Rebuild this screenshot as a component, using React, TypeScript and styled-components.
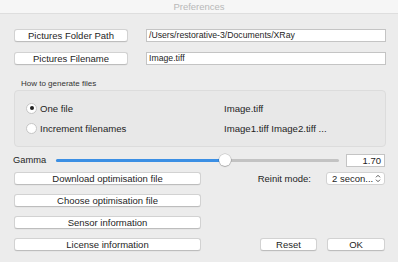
import React, {useState} from "react";
import styled, {createGlobalStyle} from "styled-components";

const GlobalStyle = createGlobalStyle`
  html, body {
    margin: 0;
    padding: 0;
    background: #ececec;
  }
  body {
    font-family: "Liberation Sans", Arial, sans-serif;
    font-size: 9.5px;
    color: #1e1e1e;
  }
`;

const Window = styled.div`
  width: 398px;
  height: 262px;
  background: #ececec;
  display: flex;
  flex-direction: column;
  overflow: hidden;
`;

const TitleBar = styled.div`
  height: 13px;
  background: #f6f6f6;
  border-bottom: 1px solid #dedede;
  color: #b8b8b8;
  font-size: 9.5px;
  line-height: 14px;
  text-align: center;
`;

const Content = styled.div`
  padding: 15px 12px 0 14px;
  display: flex;
  flex-direction: column;
`;

const Row = styled.div<{ $top?: number }>`
  display: flex;
  align-items: center;
  height: 13px;
  margin-top: ${p => p.$top ?? 0}px;
`;

const Button = styled.button<{ $w: number }>`
  box-sizing: border-box;
  width: ${p => p.$w}px;
  height: 13px;
  padding: 0;
  margin: 0;
  background: #ffffff;
  border: 1px solid #d2d2d2;
  border-bottom-color: #bdbdbd;
  border-radius: 3px;
  font-family: inherit;
  font-size: 9.5px;
  line-height: 11px;
  color: #1e1e1e;
  box-shadow: 0 0.5px 0.5px rgba(0, 0, 0, 0.06);
`;

const Field = styled.div<{ $w: number }>`
  box-sizing: border-box;
  width: ${p => p.$w}px;
  height: 13px;
  margin-left: auto;
  background: #ffffff;
  border: 1px solid #c4c4c4;
  padding: 0 2px;
  font-size: 8.7px;
  line-height: 11px;
  white-space: nowrap;
  overflow: hidden;
`;

const GroupLabel = styled.div`
  margin: 14px 0 0 7px;
  height: 9px;
  font-size: 8px;
  line-height: 9px;
  color: #333;
`;

const Group = styled.div`
  box-sizing: border-box;
  margin-top: 2px;
  height: 57px;
  border: 1px solid #dcdcdc;
  border-radius: 4px;
  background: #e8e8e8;
  padding: 7px 0 0 11px;
  display: grid;
  grid-template-columns: 187px 1fr;
  grid-auto-rows: 20px;
  align-items: center;
`;

const RadioLabel = styled.label`
  display: flex;
  align-items: center;
  gap: 3px;
  font-size: 9.6px;
`;

const RadioDot = styled.span<{ $on: boolean }>`
  box-sizing: border-box;
  width: 11px;
  height: 11px;
  border-radius: 50%;
  background: #fff;
  border: 1px solid #c6c6c6;
  display: flex;
  align-items: center;
  justify-content: center;
  &::after {
    content: "";
    width: 4px;
    height: 4px;
    border-radius: 50%;
    background: ${p => (p.$on ? "#222" : "transparent")};
  }
`;

const GroupText = styled.span`
  font-size: 9.6px;
  padding-left: 11px;
`;

const GammaRow = styled.div`
  display: flex;
  align-items: center;
  height: 14px;
  margin-top: 6px;
`;

const GammaLabel = styled.span`
  width: 43px;
  margin-left: -1px;
  font-size: 9.3px;
`;

const Track = styled.div`
  position: relative;
  width: 283px;
  height: 3px;
  border-radius: 2px;
  background: #c3c3c3;
`;

const TrackFill = styled.div`
  height: 100%;
  border-radius: 2px;
  background: #3b8fe4;
`;

const Thumb = styled.div`
  position: absolute;
  top: 50%;
  width: 12px;
  height: 12px;
  margin: -6px 0 0 -6px;
  border-radius: 50%;
  background: #fff;
  box-shadow: 0 0 0 0.5px rgba(0, 0, 0, 0.22), 0 1px 1px rgba(0, 0, 0, 0.18);
`;

const ValueBox = styled.div`
  box-sizing: border-box;
  width: 39px;
  height: 13px;
  margin-left: auto;
  margin-right: 1px;
  background: #fff;
  border: 1px solid #c4c4c4;
  font-size: 9.5px;
  line-height: 11px;
  text-align: right;
  padding-right: 3px;
`;

const Lower = styled.div`
  margin-top: 5px;
  display: grid;
  grid-template-columns: 187px 1fr;
  grid-template-rows: 13px 13px 13px 13px;
  row-gap: 9px;
`;

const Side = styled.div`
  display: flex;
  align-items: center;
  justify-content: flex-end;
  gap: 10px;
  padding-right: 1px;
`;

const ReinitLabel = styled.span`
  margin-right: 5px;
  font-size: 9.5px;
`;

const Popup = styled.div`
  box-sizing: border-box;
  width: 59px;
  height: 13px;
  background: #fff;
  border: 1px solid #d2d2d2;
  border-radius: 3px;
  display: flex;
  align-items: center;
  padding: 0 3px 0 5px;
  font-size: 9.5px;
  white-space: nowrap;
  justify-content: space-between;
`;

const Chevrons = () => (
  <svg width="6" height="9" viewBox="0 0 6 9" fill="none" stroke="#555" strokeWidth="1">
    <path d="M1 3.3 L3 1.3 L5 3.3" />
    <path d="M1 5.7 L3 7.7 L5 5.7" />
  </svg>
);

const App = (): JSX.Element => {
  const [mode, setMode] = useState("one");
  const gamma = 0.597;

  return (
    <Window>
      <GlobalStyle />
      <TitleBar>Preferences</TitleBar>
      <Content>
        <Row>
          <Button $w={114}>Pictures Folder Path</Button>
          <Field $w={240}>/Users/restorative-3/Documents/XRay</Field>
        </Row>
        <Row $top={10}>
          <Button $w={114}>Pictures Filename</Button>
          <Field $w={240}>Image.tiff</Field>
        </Row>

        <GroupLabel>How to generate files</GroupLabel>
        <Group>
          <RadioLabel onClick={() => setMode("one")}>
            <RadioDot $on={mode === "one"} />
            One file
          </RadioLabel>
          <GroupText>Image.tiff</GroupText>
          <RadioLabel onClick={() => setMode("inc")}>
            <RadioDot $on={mode === "inc"} />
            Increment filenames
          </RadioLabel>
          <GroupText>Image1.tiff Image2.tiff ...</GroupText>
        </Group>

        <GammaRow>
          <GammaLabel>Gamma</GammaLabel>
          <Track>
            <TrackFill style={{width: `${gamma * 100}%`}} />
            <Thumb style={{left: `${gamma * 100}%`}} />
          </Track>
          <ValueBox>1.70</ValueBox>
        </GammaRow>

        <Lower>
          <Button $w={187}>Download optimisation file</Button>
          <Side>
            <ReinitLabel>Reinit mode:</ReinitLabel>
            <Popup>2 secon... <Chevrons /></Popup>
          </Side>
          <Button $w={187}>Choose optimisation file</Button>
          <div />
          <Button $w={187}>Sensor information</Button>
          <div />
          <Button $w={187}>License information</Button>
          <Side>
            <Button $w={57}>Reset</Button>
            <Button $w={58}>OK</Button>
          </Side>
        </Lower>
      </Content>
    </Window>
  );
};

export default App;
